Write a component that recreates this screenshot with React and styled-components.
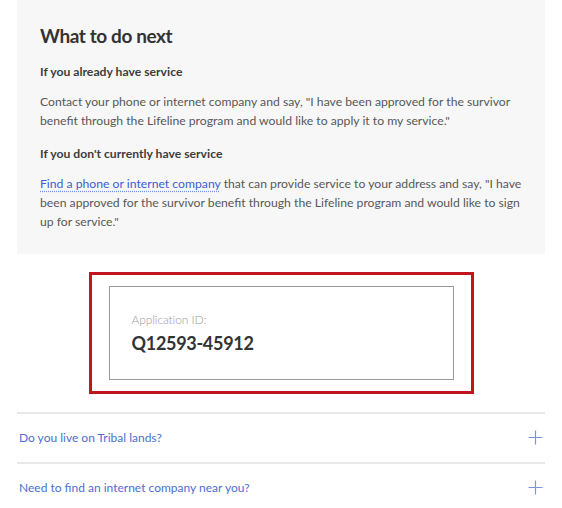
import React from 'react'
import styled, { createGlobalStyle } from 'styled-components'

const GlobalStyle = createGlobalStyle`
  body {
    margin: 0;
    background: #fff;
    font-family: Lato, "Open Sans", sans-serif;
  }
`

const Page = styled.div`
  padding: 0 17px;
`

const NextSteps = styled.section`
  background: #f7f7f7;
  padding: 24px 23px 23px;
`

const Heading = styled.h2`
  margin: 0;
  font-size: 19px;
  line-height: 24px;
  font-weight: 700;
  letter-spacing: -0.4px;
  color: #333;
`

const SubHeading = styled.h3`
  margin: 14px 0 0;
  font-size: 12.2px;
  line-height: 20px;
  font-weight: 700;
  color: #3d3d3d;
`

const Para = styled.p`
  margin: 10px 0 0;
  font-size: 12.2px;
  line-height: 19px;
  color: #585858;
`

const Link = styled.a`
  color: #3b5fd1;
  text-decoration: underline dotted #6f8ee0;
  text-underline-offset: 3px;
`

const Highlight = styled.div`
  width: 385px;
  box-sizing: border-box;
  margin: 18px auto 0;
  border: 3px solid #c0161f;
  padding: 11px 17px;
`

const IdCard = styled.div`
  border: 1.5px solid #9a9a9a;
  padding: 25px 22px 24px;
`

const IdLabel = styled.div`
  font-size: 12px;
  line-height: 16px;
  font-weight: 300;
  letter-spacing: -0.1px;
  color: #9a9a9a;
`

const IdValue = styled.div`
  margin-top: 3px;
  font-size: 18px;
  line-height: 24px;
  font-weight: 700;
  letter-spacing: -0.3px;
  color: #333;
`

const Accordion = styled.div`
  margin-top: 18px;
`

const Item = styled.button`
  display: flex;
  width: 100%;
  align-items: center;
  justify-content: space-between;
  height: 50px;
  padding: 0 2px 2px;
  border: 0;
  border-top: 2px solid #e8e8e8;
  background: none;
  font-family: inherit;
  font-size: 12px;
  color: #4d6fd0;
  cursor: pointer;
`

const Plus = () => (
  <svg width="15" height="15" viewBox="0 0 15 15" fill="none" stroke="#7c95da" strokeWidth="1.2">
    <path d="M7.5 0.5v14M0.5 7.5h14" />
  </svg>
)

export default function App() {
  return (
    <Page>
      <GlobalStyle />
      <NextSteps>
        <Heading>What to do next</Heading>
        <SubHeading>If you already have service</SubHeading>
        <Para>
          Contact your phone or internet company and say, "I have been approved for the survivor
          benefit through the Lifeline program and would like to apply it to my service."
        </Para>
        <SubHeading>If you don't currently have service</SubHeading>
        <Para>
          <Link href="#">Find a phone or internet company</Link> that can provide service to your address
          and say, "I have been approved for the survivor benefit through the Lifeline program and would
          like to sign up for service."
        </Para>
      </NextSteps>
      <Highlight>
        <IdCard>
          <IdLabel>Application ID:</IdLabel>
          <IdValue>Q12593-45912</IdValue>
        </IdCard>
      </Highlight>
      <Accordion>
        <Item>
          Do you live on Tribal lands?
          <Plus />
        </Item>
        <Item>
          Need to find an internet company near you?
          <Plus />
        </Item>
      </Accordion>
    </Page>
  )
}
